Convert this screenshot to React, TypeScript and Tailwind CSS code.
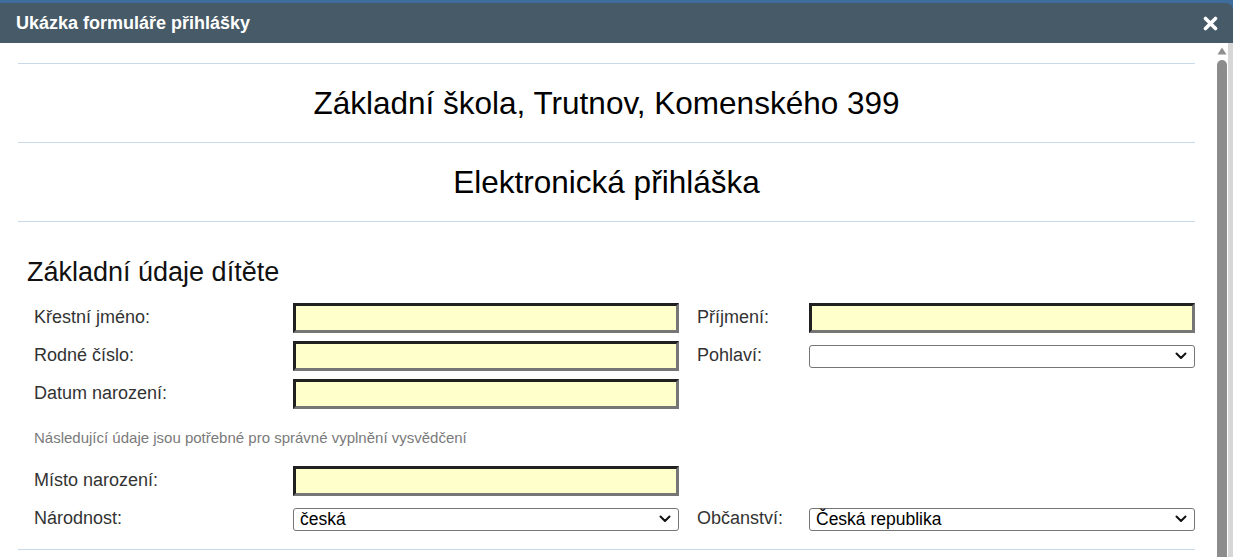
import React from 'react';

const font = { fontFamily: '"Liberation Sans", Arial, sans-serif' };

function TextInput() {
  return (
    <div className="h-[30px] w-[386px] border-[3px] border-t-[#202020] border-l-[#202020] border-b-[#767676] border-r-[#767676] bg-[#ffffcc]" />
  );
}

function Select({ value }: { value?: string }) {
  return (
    <div className="flex h-[23px] w-[386px] items-center justify-between rounded-[3px] border border-[#767676] bg-white pl-[6px] pr-[7px]">
      <span className="text-[17.5px] leading-[20px] text-black">{value ?? ''}</span>
      <svg width="12" height="8" viewBox="0 0 12 8" className="shrink-0">
        <polyline points="1.5,1.5 6,6 10.5,1.5" fill="none" stroke="#111" strokeWidth="2" strokeLinecap="round" strokeLinejoin="round" />
      </svg>
    </div>
  );
}

function Label({ children, wide }: { children: React.ReactNode; wide?: boolean }) {
  return (
    <div className={`${wide ? 'w-[275px] pl-[16px]' : 'w-[112px]'} shrink-0 self-start pt-[4px] text-[18px] leading-[20px] text-[#333333]`}>
      {children}
    </div>
  );
}

export default function App() {
  return (
    <div className="flex h-screen w-full flex-col overflow-hidden bg-[#3d6d9b]" style={font}>
      <div className="mt-[3px] flex h-[40px] shrink-0 items-center justify-between rounded-tr-[7px] bg-[#465a67] pl-[16px] pr-[15px]">
        <h1 className="text-[18px] font-bold leading-[20px] text-white">Ukázka formuláře přihlášky</h1>
        <svg width="15" height="15" viewBox="0 0 15 15">
          <path d="M2.5 2.5 L12.5 12.5 M12.5 2.5 L2.5 12.5" stroke="#fff" strokeWidth="3.6" strokeLinecap="round" />
        </svg>
      </div>

      <div className="flex min-h-0 flex-1 bg-white">
        {/* ── Form content ───────────────────────────── */}
        <div className="w-[1215px] shrink-0 pl-[18px] pr-[20px] pt-[20px]">
          <div className="border-t border-[#c9d9e8]" />
          <div className="flex h-[78px] items-center justify-center text-[31.5px] leading-[36px] text-black">
            Základní škola, Trutnov, Komenského 399
          </div>
          <div className="border-t border-[#c9d9e8]" />
          <div className="flex h-[78px] items-center justify-center text-[31.5px] leading-[36px] text-black">
            Elektronická přihláška
          </div>
          <div className="border-t border-[#c9d9e8]" />

          <h2 className="mt-[35px] pl-[9px] text-[27px] leading-[30px] text-[#111111]">Základní údaje dítěte</h2>

          <div className="mt-[16px] flex flex-col gap-[8px]">
            <div className="flex h-[30px] items-center">
              <Label wide>Křestní jméno:</Label>
              <TextInput />
              <div className="w-[18px]" />
              <Label>Příjmení:</Label>
              <TextInput />
            </div>
            <div className="flex h-[30px] items-center">
              <Label wide>Rodné číslo:</Label>
              <TextInput />
              <div className="w-[18px]" />
              <Label>Pohlaví:</Label>
              <Select />
            </div>
            <div className="flex h-[30px] items-center">
              <Label wide>Datum narození:</Label>
              <TextInput />
            </div>
          </div>

          <p className="py-[19px] pl-[16px] text-[15px] leading-[19px] text-[#7a7a7a]">
            Následující údaje jsou potřebné pro správné vyplnění vysvědčení
          </p>

          <div className="flex flex-col gap-[8px]">
            <div className="flex h-[30px] items-center">
              <Label wide>Místo narození:</Label>
              <TextInput />
            </div>
            <div className="flex h-[30px] items-center">
              <Label wide>Národnost:</Label>
              <Select value="česká" />
              <div className="w-[18px]" />
              <Label>Občanství:</Label>
              <Select value="Česká republika" />
            </div>
          </div>
          <div className="mt-[15px] border-t border-[#c9d9e8]" />
        </div>

        {/* ── Scrollbar ─────────────────────────────── */}
        <div className="flex w-[13px] shrink-0 flex-col items-center bg-white pt-[4px]">
          <svg width="10" height="8" viewBox="0 0 10 8">
            <polygon points="5,0.5 9.5,7.5 0.5,7.5" fill="#8f8f8f" />
          </svg>
          <div className="mt-[5px] w-[10px] flex-1 rounded-t-[5px] bg-[#8c8c8c]" />
        </div>
        <div className="w-[5px] shrink-0 bg-[#d6d6d6]" />
      </div>
    </div>
  );
}
